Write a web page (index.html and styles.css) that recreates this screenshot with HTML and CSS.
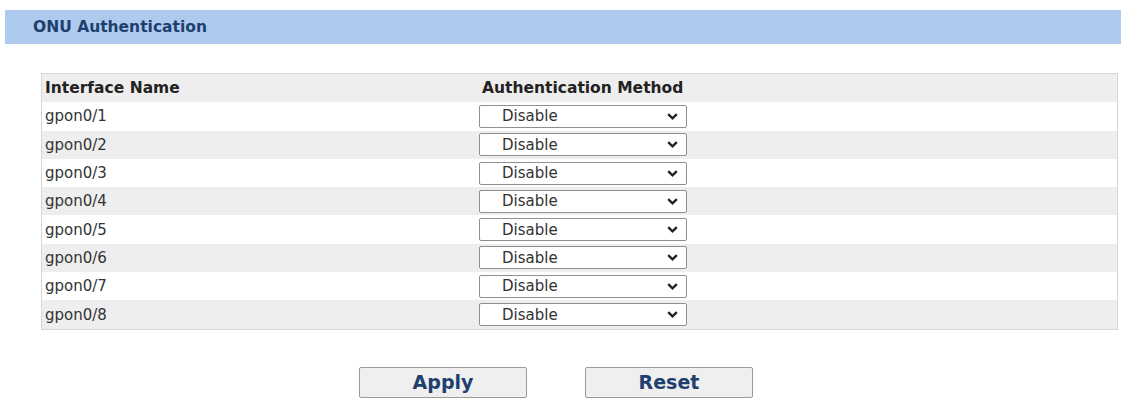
FILE: index.html
```html
<!DOCTYPE html>
<html lang="en">
<head>
    <meta charset="UTF-8">
    <title>ONU Authentication</title>
    <link rel="stylesheet" href="styles.css">
</head>
<body>

<div class="title-bar">ONU Authentication</div>

<table class="auth-table">
    <thead>
        <tr>
            <th class="col-name">Interface Name</th>
            <th>Authentication Method</th>
        </tr>
    </thead>
    <tbody id="rows"></tbody>
</table>

<div class="actions">
    <button class="btn">Apply</button>
    <button class="btn">Reset</button>
</div>

<script>
    // build the 8 gpon rows
    const tbody = document.getElementById("rows");
    for (let i = 1; i <= 8; i++) {
        const row = tbody.insertRow();
        row.insertCell().textContent = "gpon0/" + i;
        const cell = row.insertCell();
        cell.innerHTML = `
            <span class="select-wrap">
                <select><option>Disable</option><option>Enable</option></select>
                <svg class="chevron" width="11" height="7" viewBox="0 0 11 7">
                    <path d="M1.2 1.2 L5.5 5.3 L9.8 1.2" fill="none" stroke="#222" stroke-width="2.4"/>
                </svg>
            </span>`;
    }
</script>

</body>
</html>
```

FILE: styles.css
```css
body {
    margin: 0;
    background: #fff;
    font-family: "DejaVu Sans", sans-serif;
    color: #333;
}

.title-bar {
    margin: 10px 13px 0 5px;
    height: 34px;
    line-height: 34px;
    padding-left: 28px;
    background: #aecbef;
    color: #1f3f6e;
    font-weight: bold;
    font-size: 15.5px;
}

.auth-table {
    margin: 29px 0 0 41px;
    width: 1077px;
    border-collapse: collapse;
    border: 1px solid #d6d6d6;
    font-size: 15px;
}

.auth-table th,
.auth-table td {
    height: 28.3px;
    padding: 0 0 0 3px;
    text-align: left;
    vertical-align: middle;
}

.auth-table td + td {
    padding-left: 0;
}

.auth-table th {
    color: #222;
    font-weight: bold;
    font-size: 15.5px;
}

.auth-table .col-name {
    width: 434px;
}

.auth-table thead tr,
.auth-table tbody tr:nth-child(even) {
    background: #eeeeee;
}

.select-wrap {
    position: relative;
    display: block;
    width: 208px;
}

.select-wrap select {
    appearance: none;
    width: 208px;
    height: 23px;
    padding: 0 0 0 22px;
    border: 1px solid #8f8f8f;
    border-radius: 2px;
    background: #fff;
    color: #333;
    font-family: inherit;
    font-size: 15px;
    display: block;
}

.chevron {
    position: absolute;
    right: 9px;
    top: 8px;
    pointer-events: none;
}

.actions {
    display: flex;
    gap: 58px;
    margin: 37px 0 0 359px;
}

.btn {
    width: 168px;
    height: 31px;
    background: #efefef;
    border: 1px solid #9a9a9a;
    border-radius: 2px;
    color: #1f3f6e;
    font-family: inherit;
    font-weight: bold;
    font-size: 19px;
    cursor: pointer;
}
```
